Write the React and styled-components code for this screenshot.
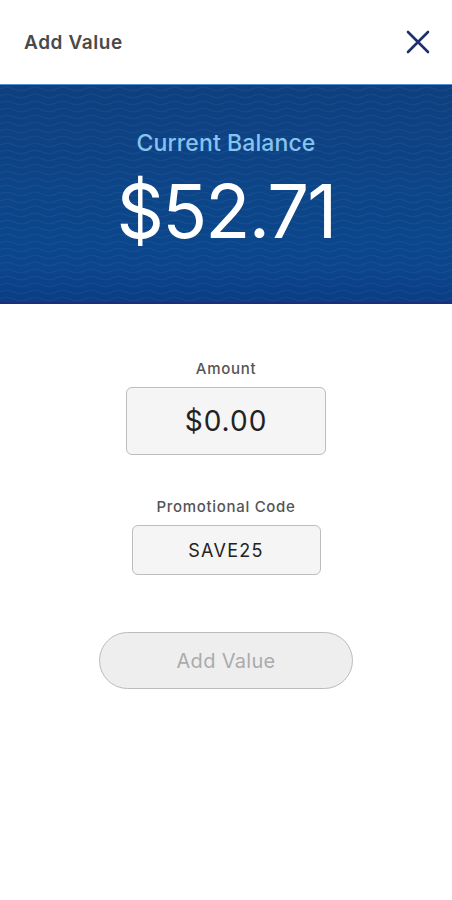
import React from "react";
import styled, { createGlobalStyle } from "styled-components";

const Global = createGlobalStyle`
  html, body { margin: 0; padding: 0; background: #fff; }
  body { font-family: Inter, "Liberation Sans", Arial, sans-serif; -webkit-font-smoothing: antialiased; }
`;

const wave = encodeURIComponent(
  `<svg xmlns="http://www.w3.org/2000/svg" width="28" height="7" viewBox="0 0 28 7"><path d="M0 4 Q7 0.5 14 4 T28 4" fill="none" stroke="rgba(255,255,255,0.045)" stroke-width="1.2"/></svg>`
);

const Page = styled.div`
  width: 452px;
  min-height: 900px;
  background: #fff;
  display: flex;
  flex-direction: column;
`;

const Header = styled.header`
  height: 84px;
  display: flex;
  align-items: center;
  justify-content: space-between;
  padding: 0 22px 0 24px;
  box-sizing: border-box;
`;

const Title = styled.h1`
  margin: 0;
  font-size: 19px;
  font-weight: 600;
  color: #4a4a4a;
  letter-spacing: 0.6px;
`;

const CloseButton = styled.button`
  border: 0;
  background: none;
  padding: 0;
  width: 24px;
  height: 24px;
  display: flex;
  align-items: center;
  justify-content: center;
  cursor: pointer;
`;

const Banner = styled.section`
  height: 220px;
  box-sizing: border-box;
  border-top: 1px solid #4d8fd0;
  border-bottom: 2px solid #1b2f7c;
  background-color: #0d4286;
  background-image: url("data:image/svg+xml,${wave}"),
    linear-gradient(180deg, #0e3f80 0%, #0c4689 55%, #0b458c 85%, #0a3d84 100%);
  display: flex;
  flex-direction: column;
  align-items: center;
  padding-top: 45px;
`;

const BalanceLabel = styled.div`
  font-size: 23px;
  font-weight: 500;
  color: #86c4ef;
  letter-spacing: 0.1px;
  line-height: 26px;
`;

const BalanceValue = styled.div`
  margin-top: 18px;
  font-size: 74px;
  font-weight: 400;
  color: #fff;
  letter-spacing: -1.8px;
  line-height: 1;
`;

const Form = styled.main`
  display: flex;
  flex-direction: column;
  align-items: center;
  padding-top: 56px;
`;

const Field = styled.div`
  display: flex;
  flex-direction: column;
  align-items: center;
  margin-bottom: ${(p) => p.$gap}px;
`;

const Label = styled.label`
  font-size: 15px;
  font-weight: 500;
  color: #555;
  letter-spacing: 0.7px;
  line-height: 18px;
  margin-bottom: 9px;
`;

const InputBox = styled.div`
  width: ${(p) => p.$w}px;
  height: ${(p) => p.$h}px;
  box-sizing: border-box;
  border: 1px solid #bdbdbd;
  border-radius: 6px;
  background: #f5f5f5;
  display: flex;
  align-items: center;
  justify-content: center;
  font-size: ${(p) => p.$size}px;
  color: #222;
  letter-spacing: ${(p) => p.$ls}px;
`;

const SubmitButton = styled.button`
  width: 254px;
  height: 57px;
  border-radius: 29px;
  border: 1px solid #bcbcbc;
  background: #eeeeee;
  color: #ababab;
  font-family: Inter, "Liberation Sans", Arial, sans-serif;
  font-size: 20px;
  font-weight: 400;
  letter-spacing: 0.3px;
  cursor: default;
`;

export default function App() {
  return (
    <Page>
      <Global />
      <Header>
        <Title>Add Value</Title>
        <CloseButton aria-label="Close">
          <svg width="24" height="24" viewBox="0 0 24 24">
            <path d="M2 2 L22 22 M22 2 L2 22" stroke="#1d2f6f" strokeWidth="2.6" strokeLinecap="round" />
          </svg>
        </CloseButton>
      </Header>
      <Banner>
        <BalanceLabel>Current Balance</BalanceLabel>
        <BalanceValue>$52.71</BalanceValue>
      </Banner>
      <Form>
        <Field $gap={43}>
          <Label>Amount</Label>
          <InputBox $w={200} $h={68} $size={28} $ls={1}>$0.00</InputBox>
        </Field>
        <Field $gap={57}>
          <Label>Promotional Code</Label>
          <InputBox $w={189} $h={50} $size={18} $ls={1.3}>SAVE25</InputBox>
        </Field>
        <SubmitButton disabled>Add Value</SubmitButton>
      </Form>
    </Page>
  );
}
